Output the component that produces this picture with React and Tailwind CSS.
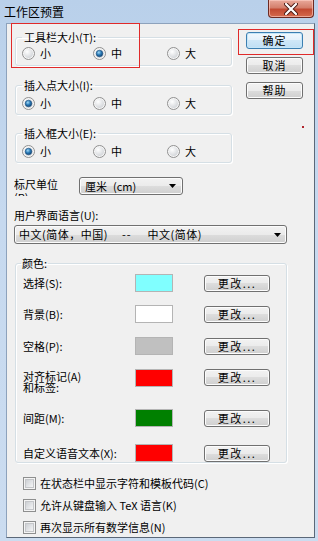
import React from "react";

function Radio({ checked }) {
  return (
    <svg width="13" height="13" viewBox="0 0 13 13" className="shrink-0">
      <defs>
        <radialGradient id="rgIn" cx="0.35" cy="0.3" r="0.8">
          <stop offset="0" stopColor="#ffffff" />
          <stop offset="1" stopColor="#cfd2d6" />
        </radialGradient>
        <radialGradient id="rgDot" cx="0.4" cy="0.35" r="0.7">
          <stop offset="0" stopColor="#a4d9f6" />
          <stop offset="0.5" stopColor="#2a7bb7" />
          <stop offset="1" stopColor="#0d3e6e" />
        </radialGradient>
      </defs>
      <circle cx="6.5" cy="6.5" r="6" fill="#f6f6f6" stroke="#8f8f8f" strokeWidth="1" />
      <circle cx="6.5" cy="6.5" r="4.5" fill="url(#rgIn)" />
      {checked && <circle cx="6.5" cy="6.5" r="3.3" fill="url(#rgDot)" stroke="#1c4f7e" strokeWidth="0.6" />}
    </svg>
  );
}

function Checkbox() {
  return (
    <div className="w-[13px] h-[13px] shrink-0 border border-[#8e8f8f] bg-[#f4f4f4] p-[1px]">
      <div className="w-full h-full border border-[#c4c6c9] bg-[linear-gradient(135deg,#cdd0d4,#f4f5f6)]" />
    </div>
  );
}

function Btn({ children, def }) {
  return (
    <div
      className={
        "w-[57px] h-[17px] rounded-[3px] border flex items-center justify-center text-[11px] leading-[13px] tracking-[1px] " +
        (def
          ? "border-[#3c7fb1] bg-[linear-gradient(#f1f8fd,#e3f1fb_50%,#cfe7f7_50%,#bfdff4)] shadow-[inset_0_0_0_1px_#c6e6f8]"
          : "border-[#707070] bg-[linear-gradient(#f2f2f2,#ebebeb_50%,#dddddd_50%,#cfcfcf)] shadow-[inset_0_0_0_1px_#fcfcfc]")
      }
    >
      {children}
    </div>
  );
}

function ChangeBtn() {
  return (
    <div className="w-[66px] h-[17px] rounded-[3px] border border-[#707070] bg-[linear-gradient(#f2f2f2,#ebebeb_50%,#dddddd_50%,#cfcfcf)] shadow-[inset_0_0_0_1px_#fcfcfc] flex items-center justify-center text-[11px] leading-[13px] tracking-[1.5px]">
      更改...
    </div>
  );
}

function Arrow() {
  return (
    <svg width="7" height="4" viewBox="0 0 7 4" className="shrink-0">
      <path d="M0 0 H7 L3.5 4 Z" fill="#000" />
    </svg>
  );
}

function SizeGroup({ label, sel, boxH, pt }) {
  const items = ["小", "中", "大"];
  const widths = ["w-[71px]", "w-[74px]", "w-[50px]"];
  return (
    <fieldset className={"border border-[#d5dfe5] rounded-[3px] px-[6px] shadow-[inset_1px_1px_0_#ffffff,1px_1px_0_#ffffff] " + boxH}>
      <legend className="px-[2px] text-[11px] leading-[13px]">{label}</legend>
      <div className={"flex items-center " + pt}>
        {items.map((t, i) => (
          <div key={t} className={"flex items-center gap-[5px] " + widths[i]}>
            <Radio checked={i === sel} />
            <span className="text-[11px] leading-[13px]">{t}</span>
          </div>
        ))}
      </div>
    </fieldset>
  );
}

function ColorRow({ label, color, mt, two }) {
  return (
    <div className={"flex pl-[7px] " + mt + (two ? " items-start" : " items-center")}>
      <div className={"w-[112px] text-[11px] " + (two ? "leading-[11px] pt-[2px]" : "leading-[13px]")}>{label}</div>
      <div className={"w-[38px] h-[18px] border border-[#b4b4b4] " + color} />
      <div className="ml-[31px]">
        <ChangeBtn />
      </div>
    </div>
  );
}

export default function App() {
  return (
    <div className="relative w-[318px] h-[541px] overflow-hidden flex flex-col bg-[linear-gradient(180deg,#b9d0ea,#c6d9ef_40%,#cbdcf0)] text-[#000] font-['Noto_Sans_CJK_SC','Liberation_Sans',sans-serif]">
      {/* title bar */}
      <div className="h-[23px] shrink-0 flex items-start">
        <div className="pl-[4px] pt-[4px] text-[12px] leading-[15px] text-[#000]">工作区预置</div>
        <div className="ml-auto mr-[4px] w-[46px] h-[18px] rounded-b-[4px] border border-t-0 border-[#6d2a22] bg-[linear-gradient(#e9a99b,#d47f6c_45%,#c24a32_55%,#d46a4e)] shadow-[inset_0_0_0_1px_rgba(255,210,200,0.6)] flex items-center justify-center">
          <svg width="14" height="12" viewBox="0 0 14 12">
            <path d="M2 1 L12 11 M12 1 L2 11" stroke="#4a1a14" strokeWidth="4" strokeLinecap="round" />
            <path d="M2 1 L12 11 M12 1 L2 11" stroke="#ffffff" strokeWidth="2.2" strokeLinecap="round" />
          </svg>
        </div>
      </div>

      {/* client area */}
      <div className="flex-1 ml-[6px] mr-[3px] mb-[3px] border border-[#8da2bc] border-r-[#5b6878] border-b-[#5b6878] bg-[#f0f0f0] flex flex-col">
        <div className="flex">
          <div className="ml-[8px] w-[217px] flex flex-col">
            <div className="mt-[7px]">
              <SizeGroup label="工具栏大小(T):" sel={1} boxH="h-[35px]" pt="pt-[3px]" />
            </div>
            <div className="mt-[13px]">
              <SizeGroup label="插入点大小(I):" sel={0} boxH="h-[36px]" pt="pt-[5px]" />
            </div>
            <div className="mt-[12px]">
              <SizeGroup label="插入框大小(E):" sel={0} boxH="h-[36px]" pt="pt-[5px]" />
            </div>
          </div>
          <div className="ml-[14px] flex flex-col gap-[8px] pt-[8px]">
            <Btn def>确定</Btn>
            <Btn>取消</Btn>
            <Btn>帮助</Btn>
          </div>
        </div>

        {/* ruler units */}
        <div className="flex items-start mt-[14px] ml-[7px]">
          <div className="w-[65px] h-[19px] overflow-hidden text-[11px] leading-[13px] pt-[1px]">
            标尺单位
            <br />
            (R):
          </div>
          <div className="w-[104px] h-[18px] rounded-[3px] border border-[#707070] bg-[linear-gradient(#f2f2f2,#ebebeb_50%,#dddddd_50%,#cfcfcf)] shadow-[inset_0_0_0_1px_#fcfcfc] flex items-center pl-[5px] pr-[6px]">
            <span className="text-[11px] leading-[13px] flex-1">
              厘米<span className="ml-[6px]">(cm)</span>
            </span>
            <Arrow />
          </div>
        </div>

        <div className="mt-[13px] ml-[7px] text-[11px] leading-[13px]">用户界面语言(U):</div>
        <div className="mt-[3px] ml-[7px] w-[273px] h-[19px] rounded-[3px] border border-[#707070] bg-[linear-gradient(#f2f2f2,#ebebeb_50%,#dddddd_50%,#cfcfcf)] shadow-[inset_0_0_0_1px_#fcfcfc] flex items-center pl-[4px] pr-[5px]">
          <span className="text-[11px] leading-[13px] flex-1 flex">
            <span className="tracking-[0.5px]">中文(简体，中国)</span>
            <span className="ml-[14px] tracking-[1px]">--</span>
            <span className="ml-[16px] tracking-[0.5px]">中文(简体)</span>
          </span>
          <Arrow />
        </div>

        {/* colors */}
        <fieldset className="mt-[13px] ml-[8px] w-[272px] h-[206px] border border-[#d5dfe5] rounded-[3px] shadow-[inset_1px_1px_0_#ffffff,1px_1px_0_#ffffff]">
          <legend className="ml-[5px] px-[1px] text-[11px] leading-[13px]">颜色:</legend>
          <ColorRow label="选择(S):" color="bg-[#80ffff]" mt="mt-[4px]" />
          <ColorRow label="背景(B):" color="bg-[#ffffff]" mt="mt-[13px]" />
          <ColorRow label="空格(P):" color="bg-[#c0c0c0]" mt="mt-[14px]" />
          <ColorRow
            label={
              <>
                对齐标记(A)
                <br />
                和标签:
              </>
            }
            color="bg-[#ff0000]"
            mt="mt-[14px]"
            two
          />
          <ColorRow label="间距(M):" color="bg-[#008000]" mt="mt-[16px]" />
          <ColorRow label="自定义语音文本(X):" color="bg-[#ff0000]" mt="mt-[17px]" />
        </fieldset>

        {/* checkboxes */}
        <div className="mt-[14px] ml-[16px] flex flex-col gap-[9px]">
          {["在状态栏中显示字符和模板代码(C)", "允许从键盘输入 TeX 语言(K)", "再次显示所有数学信息(N)"].map((t) => (
            <div key={t} className="flex items-center gap-[4px] h-[13px]">
              <Checkbox />
              <span className="text-[11px] leading-[13px] whitespace-pre">{t}</span>
            </div>
          ))}
        </div>
      </div>

      {/* annotation overlays */}
      <div className="absolute left-[11px] top-[23px] w-[129px] h-[45px] border border-[#e02a2a]" />
      <div className="absolute left-[238px] top-[29px] w-[76px] h-[26px] border border-[#e02a2a]" />
      <div className="absolute left-[302px] top-[126px] w-[2px] h-[2px] bg-[#b0242c]" />
    </div>
  );
}
